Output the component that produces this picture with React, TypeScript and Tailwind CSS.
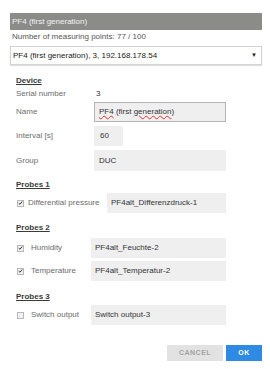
const font = { fontFamily: '"Liberation Sans", Arial, sans-serif' };

const Check = ({ checked }: { checked: boolean }) => (
  <span className="flex h-[7px] w-[7px] items-center justify-center border border-[#b8b8b8] bg-[#f2f2f2]">
    {checked && (
      <svg viewBox="0 0 8 8" className="h-[6px] w-[6px]">
        <path d="M1.2 4.2 L3.2 6 L6.8 1.6" fill="none" stroke="#333" strokeWidth="1.6" />
      </svg>
    )}
  </span>
);

const Heading = ({ text, className = '' }: { text: string; className?: string }) => (
  <div className={`ml-[6px] h-[10px] text-[8px] leading-[10px] font-bold text-[#3a3a3a] underline underline-offset-[1px] ${className}`}>
    {text}
  </div>
);

const Field = ({ value, className = '' }: { value: string; className?: string }) => (
  <div className={`flex h-[20px] items-center bg-[#efefef] text-[8px] text-[#333] ${className}`}>{value}</div>
);

const DeviceRow = ({ label, children, className = '' }: { label: string; children: React.ReactNode; className?: string }) => (
  <div className={`ml-[6px] flex items-center ${className}`}>
    <div className="w-[78px] text-[8px] text-[#6b6b6b]">{label}</div>
    {children}
  </div>
);

const ProbeRow = ({
  label,
  value,
  checked,
  labelW,
  labelPl,
  className = '',
}: {
  label: string;
  value: string;
  checked: boolean;
  labelW: string;
  labelPl: string;
  className?: string;
}) => (
  <div className={`ml-[7px] flex items-center ${className}`}>
    <Check checked={checked} />
    <div className={`${labelW} ${labelPl} text-[8px] text-[#6b6b6b]`}>{label}</div>
    <Field value={value} className="flex-1 pl-[4px]" />
  </div>
);

export default function App() {
  return (
    <div className="h-[369px] w-[270px] overflow-hidden bg-white pt-[13px] pr-[8px] pl-[10px]" style={font}>
      <div className="flex h-[17px] items-center bg-[#8b8b88] pl-[2px] text-[8px] text-[#f4f4f4]">PF4 (first generation)</div>
      <div className="mt-[2px] h-[10px] pl-[2px] text-[8px] leading-[10px] text-[#555]">Number of measuring points: 77 / 100</div>
      <div className="mt-[4px] flex h-[19px] items-center justify-between border border-[#d4d4d4] bg-white pr-[4px] pl-[2px] text-[8px] text-[#222] shadow-[0_1px_1px_rgba(0,0,0,0.12)]">
        <span>PF4 (first generation), 3, 192.168.178.54</span>
        <span className="text-[6px]">▼</span>
      </div>

      <Heading text="Device" className="mt-[11px]" />
      <DeviceRow label="Serial number" className="mt-[3px] h-[10px]">
        <span className="pl-[2px] text-[8px] text-[#333]">3</span>
      </DeviceRow>
      <DeviceRow label="Name" className="mt-[3px] mr-[36px]">
        <div className="flex h-[20px] flex-1 items-center border border-[#b4b4b4] bg-[#efefef] pl-[4px] text-[8px] text-[#333]">
          <span className="underline decoration-[#e03030] decoration-wavy decoration-[1px]">PF4</span>
          <span>&nbsp;(first&nbsp;</span>
          <span className="underline decoration-[#e03030] decoration-wavy decoration-[1px]">generation</span>
          <span>)</span>
        </div>
      </DeviceRow>
      <DeviceRow label="Interval [s]" className="mt-[4px]">
        <Field value="60" className="w-[29px] pl-[6px]" />
      </DeviceRow>
      <DeviceRow label="Group" className="mt-[4px] mr-[36px]">
        <Field value="DUC" className="h-[21px] flex-1 pl-[5px]" />
      </DeviceRow>

      <Heading text="Probes 1" className="mt-[9px]" />
      <ProbeRow
        label="Differential pressure"
        value="PF4alt_Differenzdruck-1"
        checked
        labelW="w-[83px]"
        labelPl="pl-[4px]"
        className="mt-[3px] mr-[36px]"
      />

      <Heading text="Probes 2" className="mt-[10px]" />
      <ProbeRow label="Humidity" value="PF4alt_Feuchte-2" checked labelW="w-[67px]" labelPl="pl-[7px]" className="mt-[5px] mr-[36px]" />
      <ProbeRow label="Temperature" value="PF4alt_Temperatur-2" checked labelW="w-[67px]" labelPl="pl-[7px]" className="mt-[3px] mr-[36px]" />

      <Heading text="Probes 3" className="mt-[11px]" />
      <ProbeRow label="Switch output" value="Switch output-3" checked={false} labelW="w-[67px]" labelPl="pl-[7px]" className="mt-[3px] mr-[36px]" />

      <div className="mt-[20px] flex justify-end gap-[3px]">
        <button className="h-[16px] w-[56px] bg-[#e2e2e2] text-[7px] font-bold tracking-[0.5px] text-[#a3a3a3]">CANCEL</button>
        <button className="h-[16px] w-[36px] bg-[#2e8ae2] text-[7px] font-bold tracking-[0.5px] text-white">OK</button>
      </div>
    </div>
  );
}
